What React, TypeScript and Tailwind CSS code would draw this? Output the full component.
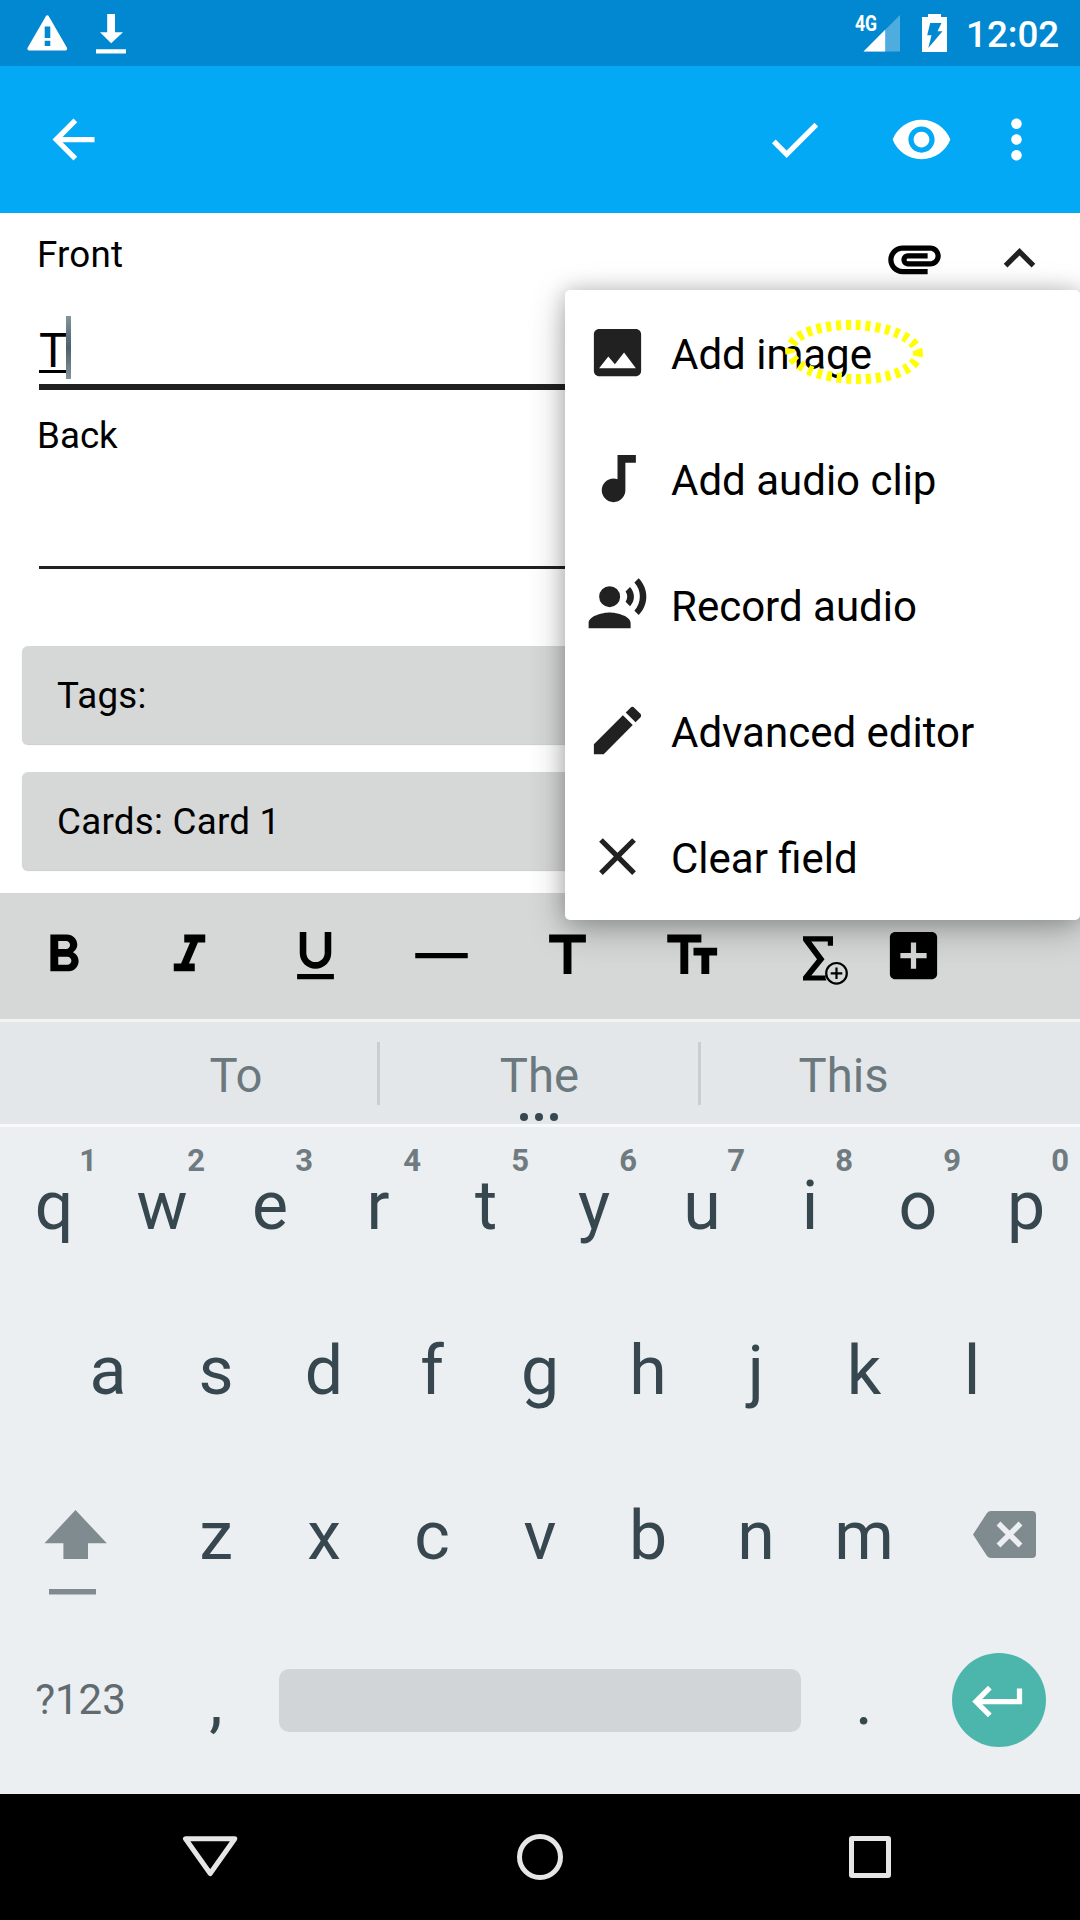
import type { ReactNode } from 'react';

type IconProps = { d: string; className?: string };

function Icon({ d, className = '' }: IconProps) {
  return (
    <svg viewBox="0 0 24 24" className={`block h-[63px] w-[63px] shrink-0 ${className}`} fill="currentColor">
      <path d={d} />
    </svg>
  );
}

const paths = {
  back: 'M20 11H7.83l5.59-5.59L12 4l-8 8 8 8 1.41-1.41L7.83 13H20v-2z',
  check: 'M9 16.17L4.83 12l-1.42 1.41L9 19 21 7l-1.41-1.41z',
  eye: 'M12 4.5C7 4.5 2.73 7.61 1 12c1.73 4.39 6 7.5 11 7.5s9.27-3.11 11-7.5c-1.73-4.39-6-7.5-11-7.5zM12 17c-2.76 0-5-2.24-5-5s2.24-5 5-5 5 2.24 5 5-2.24 5-5 5zm0-8c-1.66 0-3 1.34-3 3s1.34 3 3 3 3-1.34 3-3-1.34-3-3-3z',
  more: 'M12 8c1.1 0 2-.9 2-2s-.9-2-2-2-2 .9-2 2 .9 2 2 2zm0 2c-1.1 0-2 .9-2 2s.9 2 2 2 2-.9 2-2-.9-2-2-2zm0 6c-1.1 0-2 .9-2 2s.9 2 2 2 2-.9 2-2-.9-2-2-2z',
  clip: 'M2 12.5C2 9.46 4.46 7 7.5 7H18c2.21 0 4 1.79 4 4s-1.79 4-4 4H9.5C8.12 15 7 13.88 7 12.5S8.12 10 9.5 10H17v2H9.41c-.55 0-.55 1 0 1H18c1.1 0 2-.9 2-2s-.9-2-2-2H7.5C5.57 9 4 10.57 4 12.5S5.57 16 7.5 16H17v2H7.5C4.46 18 2 15.54 2 12.5z',
  collapse: 'M12 8l-6 6 1.41 1.41L12 10.83l4.59 4.58L18 14z',
  image: 'M21 19V5c0-1.1-.9-2-2-2H5c-1.1 0-2 .9-2 2v14c0 1.1.9 2 2 2h14c1.1 0 2-.9 2-2zM8.5 13.5l2.5 3.01L14.5 12l4.5 6H5l3.5-4.5z',
  audio: 'M12 3v9.26c-.5-.17-1-.26-1.5-.26C8 12 6 14 6 16.5S8 21 10.5 21s4.5-2 4.5-4.5V6h4V3h-7z',
  record: 'M9 5a4 4 0 1 0 0 8 4 4 0 0 0 0-8zM9 15c-2.67 0-8 1.34-8 4v2h16v-2c0-2.66-5.33-4-8-4zm7.76-9.64l-1.68 1.69c.84 1.18.84 2.71 0 3.89l1.68 1.69c2.02-2.02 2.02-5.07 0-7.27zM20.07 2l-1.63 1.63c2.77 3.02 2.77 7.56 0 10.74L20.07 16c3.9-3.89 3.91-9.95 0-14z',
  edit: 'M3 17.25V21h3.75L17.81 9.94l-3.75-3.75L3 17.25zM20.71 7.04c.39-.39.39-1.02 0-1.41l-2.34-2.34c-.39-.39-1.02-.39-1.41 0l-1.83 1.83 3.75 3.75 1.83-1.83z',
  clear: 'M19 6.41L17.59 5 12 10.59 6.41 5 5 6.41 10.59 12 5 17.59 6.41 19 12 13.41 17.59 19 19 17.59 13.41 12z',
  bold: 'M15.6 10.79c.97-.67 1.65-1.77 1.65-2.79 0-2.26-1.75-4-4-4H7v14h7.04c2.09 0 3.71-1.7 3.71-3.79 0-1.52-.86-2.82-2.15-3.42zM10 6.5h3c.83 0 1.5.67 1.5 1.5s-.67 1.5-1.5 1.5h-3v-3zm3.5 9H10v-3h3.5c.83 0 1.5.67 1.5 1.5s-.67 1.5-1.5 1.5z',
  italic: 'M10 4v3h2.21l-3.42 8H6v3h8v-3h-2.21l3.42-8H18V4z',
  underline: 'M12 17c3.31 0 6-2.69 6-6V3h-2.5v8c0 1.93-1.57 3.5-3.5 3.5S8.5 12.93 8.5 11V3H6v8c0 3.31 2.69 6 6 6zm-7 2v2h14v-2H5z',
  rule: 'M2 11h20v2H2z',
  title: 'M5 4v3h5.5v12h3V7H19V4z',
  size: 'M2 4v3h5v12h3V7h5V4H2zm19 5h-9v3h3v7h3v-7h3V9z',
  addBox: 'M19 3H5c-1.11 0-2 .9-2 2v14c0 1.1.89 2 2 2h14c1.1 0 2-.9 2-2V5c0-1.1-.9-2-2-2zm-2 10h-4v4h-2v-4H7v-2h4V7h2v4h4v2z',
  enter: 'M19 7v4H5.83l3.58-3.59L8 6l-6 6 6 6 1.41-1.41L5.83 13H21V7z',
};

function StatusBar() {
  return (
    <div className="flex h-[66px] items-start bg-[#0288d1] text-white">
      <svg viewBox="0 0 66 66" className="ml-[14px] h-[66px] w-[66px]">
        <path d="M33.3 17L51.5 48.7H15.1Z" fill="white" stroke="white" strokeWidth="3.4" strokeLinejoin="round" />
        <path d="M30.7 26.5h5.6v11.5h-5.6zM30.7 40.8h5.6v5.3h-5.6z" fill="#0288d1" />
      </svg>
      <svg viewBox="0 0 66 66" className="-ml-[2px] h-[66px] w-[66px]" fill="currentColor">
        <path d="M29.2 14h7.800v18.200h8L33.200 43.200 22 32.200h7.200zM18 49.200h30v4.300H18z" />
      </svg>
      <div className="relative ml-auto h-[66px] w-[60px]">
        <svg viewBox="0 0 60 66" className="h-[66px] w-[60px]">
          <path d="M45 15v36.500H8.500z" fill="white" fillOpacity=".3" />
          <path d="M30.200 29.800v21.700H8.500z" fill="white" />
        </svg>
        <span className="absolute top-[12px] left-0 origin-left scale-x-[0.82] text-[21.500px] leading-[24px] font-bold">4G</span>
      </div>
      <svg viewBox="0 0 40 66" className="h-[66px] w-[40px]">
        <path d="M13 14h13v3h6v35H7V17h6z" fill="white" />
        <path d="M15.200 23h11.300l-4 8.200h5L13.300 48l3.200-12.800h-4.300z" fill="#0288d1" />
      </svg>
      <span className="mt-[2px] mr-[19px] ml-[11px] w-[95px] text-[36.750px] leading-[66px] font-medium">12:02</span>
    </div>
  );
}

function AppBar() {
  return (
    <div className="flex h-[147px] items-center bg-[#03a9f4] pb-px text-white">
      <Icon d={paths.back} className="ml-[42px]" />
      <Icon d={paths.check} className="mr-[64px] ml-auto" />
      <Icon d={paths.eye} className="mr-[32px]" />
      <Icon d={paths.more} className="mr-[32px]" />
    </div>
  );
}

function Editor() {
  return (
    <div className="h-[680px] bg-white text-[36.750px] text-black">
      <div className="flex h-[90px] pr-[29px] pl-[37px]">
        <span className="leading-[83px] tracking-[0.2px]">Front</span>
        <Icon d={paths.clip} className="mt-[14px] ml-auto" />
        <Icon d={paths.collapse} className="mt-[14px] ml-[42px] text-[#212121]" />
      </div>
      <div className="mx-[39px] flex h-[87px] items-start border-b-[6px] border-[#212121] pt-[13px]">
        <span className="mt-[7px] h-[50px] w-[27px] border-b-[3px] border-black text-[47.250px] leading-[56px]">T</span>
        <span className="h-[63px] w-[5px] bg-linear-to-b from-[#84949b] via-[#4c616b] to-[#84949b]" />
      </div>
      <div className="h-[91px] pl-[37px] leading-[91px]">Back</div>
      <div className="mx-[39px] mt-[85px] h-[3px] bg-[#212121]" />
      <div className="mt-[77px] flex flex-col gap-[28px] px-[22px]">
        <Spinner>Tags:</Spinner>
        <Spinner>Cards: Card 1</Spinner>
      </div>
    </div>
  );
}

function Spinner({ children }: { children: ReactNode }) {
  return (
    <div className="h-[98px] rounded-[6px] bg-[#d6d7d7] pl-[35px] leading-[99px] tracking-[0.25px] shadow-[0_1px_1px_rgba(0,0,0,0.2)]">
      {children}
    </div>
  );
}

const menuItems = [
  { label: 'Add image', d: paths.image },
  { label: 'Add audio clip', d: paths.audio },
  { label: 'Record audio', d: paths.record },
  { label: 'Advanced editor', d: paths.edit },
  { label: 'Clear field', d: paths.clear },
];

function FieldMenu() {
  return (
    <div className="absolute top-[290px] left-[565px] w-[515px] rounded-[5px] bg-white shadow-[0_10px_36px_rgba(0,0,0,0.28),0_0_20px_rgba(0,0,0,0.18)]">
      {menuItems.map((item) => (
        <div key={item.label} className="flex h-[126px] items-start pt-[31px] pl-[21px]">
          <Icon d={item.d} className="text-[#212121]" />
          <span className="ml-[22px] text-[42px] leading-[68px] whitespace-nowrap text-black">{item.label}</span>
        </div>
      ))}
      <svg viewBox="0 0 140 66" className="absolute top-[29px] left-[219px] h-[66px] w-[140px]">
        <ellipse
          cx="70"
          cy="33"
          rx="64"
          ry="27"
          transform="rotate(1.8 70 33)"
          fill="none"
          stroke="#ffff00"
          strokeWidth="10"
          strokeDasharray="5 4.840"
          strokeDashoffset="2.500"
        />
      </svg>
    </div>
  );
}

function FormatBar() {
  return (
    <div className="flex h-[126px] items-center bg-[#d6d7d7] pb-px text-black">
      {[paths.bold, paths.italic, paths.underline, paths.rule, paths.title, paths.size].map((d) => (
        <div key={d} className="flex w-[126px] justify-center">
          <Icon d={d} />
        </div>
      ))}
      <svg viewBox="0 0 126 63" className="h-[63px] w-[126px]" fill="none" stroke="black">
        <path d="M47 12.200H77v9.600h-5.200v-4.400H55.300L68.500 35.200 55.300 51.500H69.800q-.8 2.500.5 4.900H47v-3.600L61 35.200 47 16.500z" fill="black" stroke="none" />
        <circle cx="80.500" cy="49.300" r="10.300" strokeWidth="2.200" />
        <path d="M80.500 43.500v11.600M74.700 49.300h11.600" strokeWidth="2.200" />
      </svg>
      <Icon d={paths.addBox} />
    </div>
  );
}

function Suggestions() {
  return (
    <div className="flex h-[108px] items-center border-y-[3px] border-t-[#f1f3f3] border-b-[#f7f9fa] bg-[#e3e7ea] text-[47.250px] leading-[102px] text-[#6b797e]">
      <span className="w-[377px] pt-[5px] pl-[95px] text-center">To</span>
      <span className="h-[63px] w-[3px] bg-[#c9ced1]" />
      <div className="relative w-[318px] pt-[5px] pl-[1px] text-center">
        The
        <div className="absolute inset-x-0 bottom-[6px] flex justify-center gap-[7px]">
          <i className="size-[8px] rounded-full bg-[#37474f]" />
          <i className="size-[8px] rounded-full bg-[#37474f]" />
          <i className="size-[8px] rounded-full bg-[#37474f]" />
        </div>
      </div>
      <span className="h-[63px] w-[3px] bg-[#c9ced1]" />
      <span className="w-[379px] pt-[5px] pr-[94px] text-center">This</span>
    </div>
  );
}

function Keys({ letters }: { letters: string }) {
  return (
    <>
      {letters.split('').map((c) => (
        <span key={c} className="w-[108px] text-center">{c}</span>
      ))}
    </>
  );
}

function Keyboard() {
  return (
    <div className="h-[667px] bg-[#eceff1] text-[68px] leading-[165px] text-[#37474f]">
      <div className="flex h-[162px] leading-[158px]">
        {'qwertyuiop'.split('').map((c, i) => (
          <div key={c} className="relative w-[108px] text-center">
            {c}
            <span className="absolute top-[16px] right-[11px] text-[31px] leading-[36px] font-bold text-[#6f7b80]">{(i + 1) % 10}</span>
          </div>
        ))}
      </div>
      <div className="flex h-[165px] justify-center">
        <Keys letters="asdfghjkl" />
      </div>
      <div className="flex h-[165px]">
        <svg viewBox="0 0 162 165" className="h-[165px] w-[162px]" fill="#808b8f">
          <path d="M75.500 56L106.800 89.300H88V105H63.400V89.300H44.500zM49 135h47v5.500H49z" />
        </svg>
        <Keys letters="zxcvbnm" />
        <svg viewBox="0 0 162 165" className="h-[165px] w-[162px]">
          <path d="M73 57H114q4 0 4 4V100q0 4-4 4H73q-2.500 0-4-2L55 80.500 69 59q1.300-2 4-2z" fill="#808b8f" />
          <path d="M80.500 69.500l22 22m0-22l-22 22" stroke="#eceff1" strokeWidth="5.500" />
        </svg>
      </div>
      <div className="flex h-[162px] items-center">
        <span className="w-[161px] text-center text-[42px] leading-[164px] text-[#5f6b70]">?123</span>
        <span className="ml-px w-[108px] pt-[3px] text-center">,</span>
        <span className="mx-[9px] h-[63px] w-[522px] rounded-[10px] bg-[#d1d5d8]" />
        <span className="w-[108px] pt-[3px] text-center">.</span>
        <span className="ml-[34px] flex size-[94px] items-center justify-center rounded-full bg-[#4db6ac] text-white">
          <Icon d={paths.enter} className="-ml-[2px] mt-[3px]" />
        </span>
      </div>
    </div>
  );
}

function NavBar() {
  return (
    <div className="flex h-[126px] items-center justify-center gap-[204px] bg-black">
      <svg viewBox="0 0 126 126" className="size-[126px]" fill="none" stroke="#e6e6e6" strokeWidth="5" strokeLinejoin="round">
        <path d="M38.500 44.800H87.800L63.200 79.500z" />
      </svg>
      <svg viewBox="0 0 126 126" className="size-[126px]" fill="none" stroke="#e6e6e6" strokeWidth="5">
        <circle cx="63" cy="63" r="20.500" />
      </svg>
      <svg viewBox="0 0 126 126" className="size-[126px]" fill="none" stroke="#e6e6e6" strokeWidth="5" strokeLinejoin="round">
        <rect x="44.500" y="44.500" width="37" height="37" rx="0.500" />
      </svg>
    </div>
  );
}

export default function App() {
  return (
    <div className="relative h-[1920px] w-[1080px] overflow-hidden bg-white font-['Roboto',sans-serif]">
      <StatusBar />
      <AppBar />
      <Editor />
      <FormatBar />
      <Suggestions />
      <Keyboard />
      <NavBar />
      <FieldMenu />
    </div>
  );
}
